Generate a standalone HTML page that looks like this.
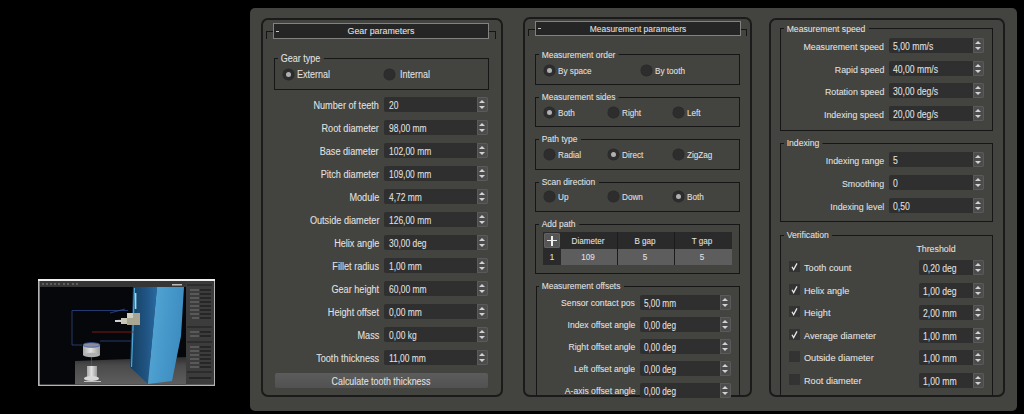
<!DOCTYPE html>
<html><head><meta charset="utf-8"><style>
html,body{margin:0;padding:0;background:#000;width:1024px;height:414px;overflow:hidden}
body{position:relative;font-family:"Liberation Sans", sans-serif;font-size:10px;color:#e2e2e2}
.t{position:absolute;white-space:nowrap;-webkit-text-stroke:0.15px rgba(226,226,226,0.5)}
.gb{position:absolute;border-left:1px solid #161616;border-right:1px solid #161616;border-top:1px solid #161616;box-sizing:border-box}
.gbt{background:#43433f}
.fd{position:absolute;background:#2f2f2f;border-radius:2px 0 0 2px}
.sp{position:absolute;width:11px;background:#4c4c4c;border-radius:0 2px 2px 0;box-shadow:inset 0 0 0 1px #5a5a5a}
.sp .up,.sp .dn{position:absolute;left:2px;width:0;height:0;border-left:3.5px solid transparent;border-right:3.5px solid transparent}
.sp .up{top:3px;border-bottom:3.5px solid #d2d2d2}
.sp .dn{top:9px;border-top:3.5px solid #d2d2d2}
.rd{position:absolute;width:11px;height:11px;border-radius:50%;background:#2d2d2d;box-shadow:0 0 0 0.5px #282828}
.rd b{position:absolute;left:3px;top:3px;width:5px;height:5px;border-radius:50%;background:#b0b0b0}
.cb{position:absolute;width:11px;height:11px;background:#333333}
.cb svg{position:absolute;left:0;top:0}
.tb{position:absolute;border:1px solid #828282;background:#252525}
.col{position:absolute;border:2px solid #1b1b1b;border-radius:7px;box-sizing:border-box;background:#43433f}
</style></head>
<body>
<div style="position:absolute;left:250px;top:8px;width:767px;height:403px;background:#43433f;border-radius:5px"></div>
<svg style="position:absolute;left:38px;top:279px" width="177" height="107" viewBox="38 279 177 107">
<defs>
<linearGradient id="lf" x1="0" y1="0" x2="1" y2="0.3"><stop offset="0" stop-color="#55a9d8"/><stop offset="1" stop-color="#3d8cc0"/></linearGradient>
<linearGradient id="df" x1="0" y1="0" x2="1" y2="0"><stop offset="0" stop-color="#163e60"/><stop offset="0.6" stop-color="#1f5482"/><stop offset="1" stop-color="#2a6aa4"/></linearGradient>
<linearGradient id="fl" x1="0" y1="0" x2="0" y2="1"><stop offset="0" stop-color="#2e2e2e"/><stop offset="0.3" stop-color="#4a4a4a"/><stop offset="1" stop-color="#5e5e5e"/></linearGradient>
<linearGradient id="cy" x1="0" y1="0" x2="1" y2="0"><stop offset="0" stop-color="#a9a9a9"/><stop offset="0.45" stop-color="#e0e0e0"/><stop offset="1" stop-color="#9a9a9a"/></linearGradient>
</defs>
<rect x="38" y="279" width="177" height="107" fill="#b4b4b4"/>
<rect x="38" y="279" width="177" height="2" fill="#f0f0f0"/>
<rect x="39.5" y="281" width="174.5" height="103.5" fill="#3a3a3a"/>
<rect x="40" y="287" width="146" height="97.5" fill="#05070a"/>
<polygon points="75,361 186,357 186,384.5 75,384.5" fill="url(#fl)"/>
<polygon points="133,287 157,287 148,384 130,367" fill="url(#df)"/>
<polygon points="157,287 184,287 181,336 172,381 148,384" fill="url(#lf)"/>
<path d="M134.5 288 L131.5 367" stroke="#4fa6d6" stroke-width="1.2"/>
<rect x="134.8" y="293" width="1.6" height="16" fill="#8fdcf5"/>
<path d="M72 345 V310.5 H128 M100 341 H131 M72 345 H82" stroke="#34509a" stroke-width="0.7" fill="none"/>
<path d="M110 313 L125 309 M118 320 L124 320" stroke="#34509a" stroke-width="1.2" fill="none" opacity="0.7"/>
<path d="M92 332 H134" stroke="#9a1c1c" stroke-width="0.8"/>
<rect x="121" y="318" width="11" height="6" fill="#c8c6b4"/>
<rect x="127" y="313" width="13" height="12" fill="#a9a694"/>
<rect x="127" y="313" width="6" height="5" fill="#d0cebc"/>
<rect x="115" y="320" width="7" height="2" fill="#d0d0d0"/>
<rect x="83" y="345" width="17" height="10" fill="url(#cy)"/>
<ellipse cx="91.5" cy="355" rx="8.5" ry="2.2" fill="#b0b0b0"/>
<ellipse cx="91.5" cy="345" rx="8.5" ry="2.3" fill="#8a8a9a" stroke="#3a5cb0" stroke-width="0.8"/>
<path d="M91.5 357 V366" stroke="#3a5cb0" stroke-width="0.7"/>
<rect x="87" y="366" width="10" height="11" fill="url(#cy)"/>
<ellipse cx="91.5" cy="378.5" rx="7.5" ry="2.5" fill="#d8d8d8"/>
<path d="M84 381.5 H101" stroke="#c0c0c0" stroke-width="1"/>
<rect x="186" y="283" width="27.5" height="101.5" fill="#3c3c3c"/>
<rect x="187" y="284" width="25" height="2" fill="#2c2c2c"/>
<rect x="187" y="326" width="25" height="2" fill="#2c2c2c"/>
<rect x="187" y="341" width="25" height="2" fill="#2c2c2c"/>
<rect x="187" y="371" width="25" height="2" fill="#2c2c2c"/>
<g fill="#262626">
<rect x="200" y="289" width="11" height="2"/><rect x="200" y="293" width="11" height="2"/><rect x="200" y="297" width="11" height="2"/><rect x="200" y="301" width="11" height="2"/><rect x="200" y="305" width="11" height="2"/><rect x="200" y="309" width="11" height="2"/><rect x="200" y="313" width="11" height="2"/><rect x="200" y="317" width="11" height="2"/>
<rect x="200" y="331" width="11" height="2"/><rect x="200" y="335" width="11" height="2"/>
<rect x="200" y="346" width="11" height="2"/><rect x="200" y="350" width="11" height="2"/><rect x="200" y="354" width="11" height="2"/><rect x="200" y="358" width="11" height="2"/><rect x="200" y="362" width="11" height="2"/><rect x="200" y="366" width="11" height="2"/>
<rect x="189" y="377" width="22" height="2"/>
</g>
<g fill="#777">
<rect x="190" y="289.5" width="9" height="1"/><rect x="190" y="293.5" width="9" height="1"/><rect x="190" y="297.5" width="9" height="1"/><rect x="190" y="301.5" width="9" height="1"/><rect x="190" y="305.5" width="9" height="1"/><rect x="190" y="309.5" width="9" height="1"/><rect x="190" y="313.5" width="9" height="1"/><rect x="192" y="317.5" width="7" height="1"/>
<rect x="190" y="331.5" width="9" height="1"/><rect x="190" y="335.5" width="9" height="1"/>
<rect x="190" y="346.5" width="9" height="1"/><rect x="190" y="350.5" width="9" height="1"/><rect x="190" y="354.5" width="9" height="1"/><rect x="190" y="358.5" width="9" height="1"/><rect x="190" y="362.5" width="9" height="1"/><rect x="190" y="366.5" width="9" height="1"/>
</g>
<rect x="40" y="281" width="146" height="6" fill="#363636"/>
<g fill="#5e5e5e"><rect x="42" y="283" width="2" height="2"/><rect x="46" y="283" width="2" height="2"/><rect x="50" y="283" width="2" height="2"/><rect x="54" y="283" width="2" height="2"/><rect x="58" y="283" width="2" height="2"/><rect x="63" y="283" width="2" height="2"/><rect x="67" y="283" width="2" height="2"/><rect x="72" y="283" width="2" height="2"/><rect x="76" y="283" width="2" height="2"/></g>
<rect x="172" y="284" width="10" height="1.5" fill="#bbb"/>
</svg>

<div class="col" style="left:261px;top:18px;width:242px;height:379px"></div>
<div class="col" style="left:523px;top:17px;width:229px;height:380px"></div>
<div class="col" style="left:769px;top:18px;width:236px;height:379px"></div>
<div style="position:absolute;left:266px;top:31px;width:7px;height:1px;background:#161616"></div>
<div style="position:absolute;left:266px;top:31px;width:1px;height:8px;background:#161616"></div>
<div style="position:absolute;left:489px;top:31px;width:7px;height:1px;background:#161616"></div>
<div style="position:absolute;left:495px;top:31px;width:1px;height:8px;background:#161616"></div>
<div class="tb" style="left:273px;top:23px;width:214px;height:14px;"></div>
<div style="position:absolute;left:276px;top:31px;width:3px;height:1px;background:#c4c4c4"></div>
<div class="t" style="left:281px;width:200px;font-size:9.87px;top:23px;height:16px;line-height:16px;text-align:center;transform:scaleX(0.8981);transform-origin:center center;">Gear parameters</div>
<div class="gb" style="left:274px;top:58px;width:215px;height:32px;border-bottom:1px solid #161616;"></div>
<div class="t gbt" style="font-size:10.19px;left:278px;top:52px;height:14px;line-height:14px;padding:0 4px 0 3px;transform:scaleX(0.8838);transform-origin:left center">Gear type</div>
<div class="rd" style="left:282.5px;top:68.5px;"><b></b></div>
<div class="t" style="left:297px;font-size:10.19px;top:68px;height:14px;line-height:14px;transform:scaleX(0.8838);transform-origin:left center;">External</div>
<div class="rd" style="left:383.5px;top:68.5px;"></div>
<div class="t" style="left:400px;font-size:10.19px;top:68px;height:14px;line-height:14px;transform:scaleX(0.8838);transform-origin:left center;">Internal</div>
<div class="t" style="right:645px;font-size:10.19px;top:98px;height:15px;line-height:15px;text-align:right;transform:scaleX(0.8981);transform-origin:right center;">Number of teeth</div>
<div class="fd" style="left:384px;top:97px;width:93px;height:15px;"></div>
<div class="t" style="left:389px;font-size:10.5px;top:98px;height:15px;line-height:15px;transform:scaleX(0.8038);transform-origin:left center;">20</div>
<div class="sp" style="left:477px;top:97px;height:15px;"><i class="up"></i><i class="dn"></i></div>
<div class="t" style="right:645px;font-size:10.19px;top:121px;height:15px;line-height:15px;text-align:right;transform:scaleX(0.8981);transform-origin:right center;">Root diameter</div>
<div class="fd" style="left:384px;top:120px;width:93px;height:15px;"></div>
<div class="t" style="left:389px;font-size:10.5px;top:121px;height:15px;line-height:15px;transform:scaleX(0.8038);transform-origin:left center;">98,00 mm</div>
<div class="sp" style="left:477px;top:120px;height:15px;"><i class="up"></i><i class="dn"></i></div>
<div class="t" style="right:645px;font-size:10.19px;top:144px;height:15px;line-height:15px;text-align:right;transform:scaleX(0.8981);transform-origin:right center;">Base diameter</div>
<div class="fd" style="left:384px;top:143px;width:93px;height:15px;"></div>
<div class="t" style="left:389px;font-size:10.5px;top:144px;height:15px;line-height:15px;transform:scaleX(0.8038);transform-origin:left center;">102,00 mm</div>
<div class="sp" style="left:477px;top:143px;height:15px;"><i class="up"></i><i class="dn"></i></div>
<div class="t" style="right:645px;font-size:10.19px;top:167px;height:15px;line-height:15px;text-align:right;transform:scaleX(0.8981);transform-origin:right center;">Pitch diameter</div>
<div class="fd" style="left:384px;top:166px;width:93px;height:15px;"></div>
<div class="t" style="left:389px;font-size:10.5px;top:167px;height:15px;line-height:15px;transform:scaleX(0.8038);transform-origin:left center;">109,00 mm</div>
<div class="sp" style="left:477px;top:166px;height:15px;"><i class="up"></i><i class="dn"></i></div>
<div class="t" style="right:645px;font-size:10.19px;top:190px;height:15px;line-height:15px;text-align:right;transform:scaleX(0.8981);transform-origin:right center;">Module</div>
<div class="fd" style="left:384px;top:189px;width:93px;height:15px;"></div>
<div class="t" style="left:389px;font-size:10.5px;top:190px;height:15px;line-height:15px;transform:scaleX(0.8038);transform-origin:left center;">4,72 mm</div>
<div class="sp" style="left:477px;top:189px;height:15px;"><i class="up"></i><i class="dn"></i></div>
<div class="t" style="right:645px;font-size:10.19px;top:213px;height:15px;line-height:15px;text-align:right;transform:scaleX(0.8981);transform-origin:right center;">Outside diameter</div>
<div class="fd" style="left:384px;top:212px;width:93px;height:15px;"></div>
<div class="t" style="left:389px;font-size:10.5px;top:213px;height:15px;line-height:15px;transform:scaleX(0.8038);transform-origin:left center;">126,00 mm</div>
<div class="sp" style="left:477px;top:212px;height:15px;"><i class="up"></i><i class="dn"></i></div>
<div class="t" style="right:645px;font-size:10.19px;top:236px;height:15px;line-height:15px;text-align:right;transform:scaleX(0.8981);transform-origin:right center;">Helix angle</div>
<div class="fd" style="left:384px;top:235px;width:93px;height:15px;"></div>
<div class="t" style="left:389px;font-size:10.5px;top:236px;height:15px;line-height:15px;transform:scaleX(0.8038);transform-origin:left center;">30,00 deg</div>
<div class="sp" style="left:477px;top:235px;height:15px;"><i class="up"></i><i class="dn"></i></div>
<div class="t" style="right:645px;font-size:10.19px;top:259px;height:15px;line-height:15px;text-align:right;transform:scaleX(0.8981);transform-origin:right center;">Fillet radius</div>
<div class="fd" style="left:384px;top:258px;width:93px;height:15px;"></div>
<div class="t" style="left:389px;font-size:10.5px;top:259px;height:15px;line-height:15px;transform:scaleX(0.8038);transform-origin:left center;">1,00 mm</div>
<div class="sp" style="left:477px;top:258px;height:15px;"><i class="up"></i><i class="dn"></i></div>
<div class="t" style="right:645px;font-size:10.19px;top:282px;height:15px;line-height:15px;text-align:right;transform:scaleX(0.8981);transform-origin:right center;">Gear height</div>
<div class="fd" style="left:384px;top:281px;width:93px;height:15px;"></div>
<div class="t" style="left:389px;font-size:10.5px;top:282px;height:15px;line-height:15px;transform:scaleX(0.8038);transform-origin:left center;">60,00 mm</div>
<div class="sp" style="left:477px;top:281px;height:15px;"><i class="up"></i><i class="dn"></i></div>
<div class="t" style="right:645px;font-size:10.19px;top:305px;height:15px;line-height:15px;text-align:right;transform:scaleX(0.8981);transform-origin:right center;">Height offset</div>
<div class="fd" style="left:384px;top:304px;width:93px;height:15px;"></div>
<div class="t" style="left:389px;font-size:10.5px;top:305px;height:15px;line-height:15px;transform:scaleX(0.8038);transform-origin:left center;">0,00 mm</div>
<div class="sp" style="left:477px;top:304px;height:15px;"><i class="up"></i><i class="dn"></i></div>
<div class="t" style="right:645px;font-size:10.19px;top:328px;height:15px;line-height:15px;text-align:right;transform:scaleX(0.8981);transform-origin:right center;">Mass</div>
<div class="fd" style="left:384px;top:327px;width:93px;height:15px;"></div>
<div class="t" style="left:389px;font-size:10.5px;top:328px;height:15px;line-height:15px;transform:scaleX(0.8038);transform-origin:left center;">0,00 kg</div>
<div class="sp" style="left:477px;top:327px;height:15px;"><i class="up"></i><i class="dn"></i></div>
<div class="t" style="right:645px;font-size:10.19px;top:351px;height:15px;line-height:15px;text-align:right;transform:scaleX(0.8981);transform-origin:right center;">Tooth thickness</div>
<div class="fd" style="left:384px;top:350px;width:93px;height:15px;"></div>
<div class="t" style="left:389px;font-size:10.5px;top:351px;height:15px;line-height:15px;transform:scaleX(0.8038);transform-origin:left center;">11,00 mm</div>
<div class="sp" style="left:477px;top:350px;height:15px;"><i class="up"></i><i class="dn"></i></div>
<div style="position:absolute;left:275px;top:373px;width:213px;height:15px;background:linear-gradient(#5c5c5c,#515151);border-radius:2px"></div>
<div class="t" style="left:281px;width:200px;font-size:10.19px;top:374px;height:15px;line-height:15px;text-align:center;transform:scaleX(0.8743);transform-origin:center center;">Calculate tooth thickness</div>
<div style="position:absolute;left:528px;top:29px;width:7px;height:1px;background:#161616"></div>
<div style="position:absolute;left:528px;top:29px;width:1px;height:7px;background:#161616"></div>
<div style="position:absolute;left:741px;top:29px;width:6px;height:1px;background:#161616"></div>
<div style="position:absolute;left:746px;top:29px;width:1px;height:7px;background:#161616"></div>
<div class="tb" style="left:535px;top:21px;width:204px;height:13px;"></div>
<div style="position:absolute;left:538px;top:28px;width:3px;height:1px;background:#c4c4c4"></div>
<div class="t" style="left:538px;width:200px;font-size:9.45px;top:21px;height:15px;line-height:15px;text-align:center;transform:scaleX(0.8914);transform-origin:center center;">Measurement parameters</div>
<div class="gb" style="left:535px;top:54px;width:205px;height:31px;border-bottom:1px solid #161616;"></div>
<div class="t gbt" style="font-size:9.45px;left:539px;top:48px;height:14px;line-height:14px;padding:0 4px 0 3px;transform:scaleX(0.8952);transform-origin:left center">Measurement order</div>
<div class="rd" style="left:543.5px;top:64.5px;"><b></b></div>
<div class="t" style="left:558px;font-size:9.45px;top:64px;height:14px;line-height:14px;transform:scaleX(0.865);transform-origin:left center;">By space</div>
<div class="rd" style="left:640.5px;top:64.5px;"></div>
<div class="t" style="left:655px;font-size:9.45px;top:64px;height:14px;line-height:14px;transform:scaleX(0.865);transform-origin:left center;">By tooth</div>
<div class="gb" style="left:535px;top:97px;width:205px;height:30px;border-bottom:1px solid #161616;"></div>
<div class="t gbt" style="font-size:9.45px;left:539px;top:90px;height:14px;line-height:14px;padding:0 4px 0 3px;transform:scaleX(0.8952);transform-origin:left center">Measurement sides</div>
<div class="rd" style="left:543.5px;top:106.5px;"><b></b></div>
<div class="t" style="left:558px;font-size:9.45px;top:106px;height:14px;line-height:14px;transform:scaleX(0.865);transform-origin:left center;">Both</div>
<div class="rd" style="left:607.5px;top:106.5px;"></div>
<div class="t" style="left:622px;font-size:9.45px;top:106px;height:14px;line-height:14px;transform:scaleX(0.865);transform-origin:left center;">Right</div>
<div class="rd" style="left:672.5px;top:106.5px;"></div>
<div class="t" style="left:687px;font-size:9.45px;top:106px;height:14px;line-height:14px;transform:scaleX(0.865);transform-origin:left center;">Left</div>
<div class="gb" style="left:535px;top:139px;width:205px;height:31px;border-bottom:1px solid #161616;"></div>
<div class="t gbt" style="font-size:9.45px;left:539px;top:132px;height:14px;line-height:14px;padding:0 4px 0 3px;transform:scaleX(0.8952);transform-origin:left center">Path type</div>
<div class="rd" style="left:543.5px;top:148.5px;"></div>
<div class="t" style="left:558px;font-size:9.45px;top:148px;height:14px;line-height:14px;transform:scaleX(0.865);transform-origin:left center;">Radial</div>
<div class="rd" style="left:607.5px;top:148.5px;"><b></b></div>
<div class="t" style="left:622px;font-size:9.45px;top:148px;height:14px;line-height:14px;transform:scaleX(0.865);transform-origin:left center;">Direct</div>
<div class="rd" style="left:672.5px;top:148.5px;"></div>
<div class="t" style="left:687px;font-size:9.45px;top:148px;height:14px;line-height:14px;transform:scaleX(0.865);transform-origin:left center;">ZigZag</div>
<div class="gb" style="left:535px;top:182px;width:205px;height:30px;border-bottom:1px solid #161616;"></div>
<div class="t gbt" style="font-size:9.45px;left:539px;top:175px;height:14px;line-height:14px;padding:0 4px 0 3px;transform:scaleX(0.8952);transform-origin:left center">Scan direction</div>
<div class="rd" style="left:543.5px;top:190.5px;"></div>
<div class="t" style="left:558px;font-size:9.45px;top:190px;height:14px;line-height:14px;transform:scaleX(0.865);transform-origin:left center;">Up</div>
<div class="rd" style="left:607.5px;top:190.5px;"></div>
<div class="t" style="left:622px;font-size:9.45px;top:190px;height:14px;line-height:14px;transform:scaleX(0.865);transform-origin:left center;">Down</div>
<div class="rd" style="left:672.5px;top:190.5px;"><b></b></div>
<div class="t" style="left:687px;font-size:9.45px;top:190px;height:14px;line-height:14px;transform:scaleX(0.865);transform-origin:left center;">Both</div>
<div class="gb" style="left:535px;top:224px;width:205px;height:50px;border-bottom:1px solid #161616;"></div>
<div class="t gbt" style="font-size:9.45px;left:539px;top:217px;height:14px;line-height:14px;padding:0 4px 0 3px;transform:scaleX(0.8952);transform-origin:left center">Add path</div>
<div style="position:absolute;left:543px;top:232px;width:189px;height:32.5px;background:#2a2a2a"></div>
<div style="position:absolute;left:544px;top:232.5px;width:16px;height:15px;background:#555;border-radius:2px;box-shadow:inset 0 0 0 1px #626262"></div>
<div style="position:absolute;left:547px;top:240px;width:10px;height:1.4px;background:#eee"></div>
<div style="position:absolute;left:551.3px;top:235.5px;width:1.4px;height:10px;background:#eee"></div>
<div style="position:absolute;left:560.5px;top:248.5px;width:57px;height:16px;background:#5d5d5d"></div>
<div style="position:absolute;left:618px;top:248.5px;width:56px;height:16px;background:#5d5d5d"></div>
<div style="position:absolute;left:675px;top:248.5px;width:57px;height:16px;background:#5d5d5d"></div>
<div style="position:absolute;left:617px;top:232px;width:1px;height:33px;background:#1c1c1c"></div>
<div style="position:absolute;left:674px;top:232px;width:1px;height:33px;background:#1c1c1c"></div>
<div class="t" style="left:488px;width:200px;font-size:9.45px;top:233px;height:15px;line-height:15px;text-align:center;transform:scaleX(0.8571);transform-origin:center center;">Diameter</div>
<div class="t" style="left:545px;width:200px;font-size:9.45px;top:233px;height:15px;line-height:15px;text-align:center;transform:scaleX(0.8571);transform-origin:center center;">B gap</div>
<div class="t" style="left:602px;width:200px;font-size:9.45px;top:233px;height:15px;line-height:15px;text-align:center;transform:scaleX(0.8571);transform-origin:center center;">T gap</div>
<div class="t" style="left:452px;width:200px;font-size:9.45px;top:249px;height:16px;line-height:16px;text-align:center;transform:scaleX(0.8571);transform-origin:center center;">1</div>
<div class="t" style="left:488px;width:200px;font-size:9.45px;top:249px;height:16px;line-height:16px;text-align:center;transform:scaleX(0.8571);transform-origin:center center;">109</div>
<div class="t" style="left:545px;width:200px;font-size:9.45px;top:249px;height:16px;line-height:16px;text-align:center;transform:scaleX(0.8571);transform-origin:center center;">5</div>
<div class="t" style="left:602px;width:200px;font-size:9.45px;top:249px;height:16px;line-height:16px;text-align:center;transform:scaleX(0.8571);transform-origin:center center;">5</div>
<div class="gb" style="left:536px;top:286px;width:204px;height:109px;"></div>
<div class="t gbt" style="font-size:9.45px;left:539px;top:279px;height:14px;line-height:14px;padding:0 4px 0 3px;transform:scaleX(0.8952);transform-origin:left center">Measurement offsets</div>
<div class="t" style="right:389px;font-size:9.45px;top:295px;height:15px;line-height:15px;text-align:right;transform:scaleX(0.912);transform-origin:right center;">Sensor contact pos</div>
<div class="fd" style="left:640px;top:295px;width:80px;height:15px;"></div>
<div class="t" style="left:644px;font-size:10.08px;top:296px;height:15px;line-height:15px;transform:scaleX(0.8162);transform-origin:left center;">5,00 mm</div>
<div class="sp" style="left:720px;top:295px;height:15px;"><i class="up"></i><i class="dn"></i></div>
<div class="t" style="right:389px;font-size:9.45px;top:317px;height:15px;line-height:15px;text-align:right;transform:scaleX(0.912);transform-origin:right center;">Index offset angle</div>
<div class="fd" style="left:640px;top:317px;width:80px;height:15px;"></div>
<div class="t" style="left:644px;font-size:10.08px;top:318px;height:15px;line-height:15px;transform:scaleX(0.8162);transform-origin:left center;">0,00 deg</div>
<div class="sp" style="left:720px;top:317px;height:15px;"><i class="up"></i><i class="dn"></i></div>
<div class="t" style="right:389px;font-size:9.45px;top:339px;height:15px;line-height:15px;text-align:right;transform:scaleX(0.912);transform-origin:right center;">Right offset angle</div>
<div class="fd" style="left:640px;top:339px;width:80px;height:15px;"></div>
<div class="t" style="left:644px;font-size:10.08px;top:340px;height:15px;line-height:15px;transform:scaleX(0.8162);transform-origin:left center;">0,00 deg</div>
<div class="sp" style="left:720px;top:339px;height:15px;"><i class="up"></i><i class="dn"></i></div>
<div class="t" style="right:389px;font-size:9.45px;top:361px;height:15px;line-height:15px;text-align:right;transform:scaleX(0.912);transform-origin:right center;">Left offset angle</div>
<div class="fd" style="left:640px;top:361px;width:80px;height:15px;"></div>
<div class="t" style="left:644px;font-size:10.08px;top:362px;height:15px;line-height:15px;transform:scaleX(0.8162);transform-origin:left center;">0,00 deg</div>
<div class="sp" style="left:720px;top:361px;height:15px;"><i class="up"></i><i class="dn"></i></div>
<div class="t" style="right:389px;font-size:9.45px;top:383px;height:15px;line-height:15px;text-align:right;transform:scaleX(0.912);transform-origin:right center;">A-axis offset angle</div>
<div class="fd" style="left:640px;top:383px;width:80px;height:15px;"></div>
<div class="t" style="left:644px;font-size:10.08px;top:384px;height:15px;line-height:15px;transform:scaleX(0.8162);transform-origin:left center;">0,00 deg</div>
<div class="sp" style="left:720px;top:383px;height:15px;"><i class="up"></i><i class="dn"></i></div>
<div class="gb" style="left:780px;top:28px;width:213px;height:103px;border-bottom:1px solid #161616;"></div>
<div class="t gbt" style="font-size:9.87px;left:784px;top:22px;height:14px;line-height:14px;padding:0 4px 0 3px;transform:scaleX(0.8762);transform-origin:left center">Measurement speed</div>
<div class="t" style="right:140px;font-size:9.87px;top:39px;height:15px;line-height:15px;text-align:right;transform:scaleX(0.8952);transform-origin:right center;">Measurement speed</div>
<div class="fd" style="left:889px;top:38px;width:84px;height:15px;"></div>
<div class="t" style="left:893px;font-size:10.5px;top:39px;height:15px;line-height:15px;transform:scaleX(0.8219);transform-origin:left center;">5,00 mm/s</div>
<div class="sp" style="left:973px;top:38px;height:15px;"><i class="up"></i><i class="dn"></i></div>
<div class="t" style="right:140px;font-size:9.87px;top:62px;height:15px;line-height:15px;text-align:right;transform:scaleX(0.8952);transform-origin:right center;">Rapid speed</div>
<div class="fd" style="left:889px;top:61px;width:84px;height:15px;"></div>
<div class="t" style="left:893px;font-size:10.5px;top:62px;height:15px;line-height:15px;transform:scaleX(0.8219);transform-origin:left center;">40,00 mm/s</div>
<div class="sp" style="left:973px;top:61px;height:15px;"><i class="up"></i><i class="dn"></i></div>
<div class="t" style="right:140px;font-size:9.87px;top:84px;height:15px;line-height:15px;text-align:right;transform:scaleX(0.8952);transform-origin:right center;">Rotation speed</div>
<div class="fd" style="left:889px;top:83px;width:84px;height:15px;"></div>
<div class="t" style="left:893px;font-size:10.5px;top:84px;height:15px;line-height:15px;transform:scaleX(0.8219);transform-origin:left center;">30,00 deg/s</div>
<div class="sp" style="left:973px;top:83px;height:15px;"><i class="up"></i><i class="dn"></i></div>
<div class="t" style="right:140px;font-size:9.87px;top:107px;height:15px;line-height:15px;text-align:right;transform:scaleX(0.8952);transform-origin:right center;">Indexing speed</div>
<div class="fd" style="left:889px;top:106px;width:84px;height:15px;"></div>
<div class="t" style="left:893px;font-size:10.5px;top:107px;height:15px;line-height:15px;transform:scaleX(0.8219);transform-origin:left center;">20,00 deg/s</div>
<div class="sp" style="left:973px;top:106px;height:15px;"><i class="up"></i><i class="dn"></i></div>
<div class="gb" style="left:780px;top:143px;width:213px;height:79px;border-bottom:1px solid #161616;"></div>
<div class="t gbt" style="font-size:9.87px;left:784px;top:136px;height:14px;line-height:14px;padding:0 4px 0 3px;transform:scaleX(0.8762);transform-origin:left center">Indexing</div>
<div class="t" style="right:140px;font-size:9.87px;top:153px;height:15px;line-height:15px;text-align:right;transform:scaleX(0.8952);transform-origin:right center;">Indexing range</div>
<div class="fd" style="left:889px;top:152px;width:84px;height:15px;"></div>
<div class="t" style="left:893px;font-size:10.5px;top:153px;height:15px;line-height:15px;transform:scaleX(0.8219);transform-origin:left center;">5</div>
<div class="sp" style="left:973px;top:152px;height:15px;"><i class="up"></i><i class="dn"></i></div>
<div class="t" style="right:140px;font-size:9.87px;top:176px;height:15px;line-height:15px;text-align:right;transform:scaleX(0.8952);transform-origin:right center;">Smoothing</div>
<div class="fd" style="left:889px;top:175px;width:84px;height:15px;"></div>
<div class="t" style="left:893px;font-size:10.5px;top:176px;height:15px;line-height:15px;transform:scaleX(0.8219);transform-origin:left center;">0</div>
<div class="sp" style="left:973px;top:175px;height:15px;"><i class="up"></i><i class="dn"></i></div>
<div class="t" style="right:140px;font-size:9.87px;top:199px;height:15px;line-height:15px;text-align:right;transform:scaleX(0.8952);transform-origin:right center;">Indexing level</div>
<div class="fd" style="left:889px;top:198px;width:84px;height:15px;"></div>
<div class="t" style="left:893px;font-size:10.5px;top:199px;height:15px;line-height:15px;transform:scaleX(0.8219);transform-origin:left center;">0,50</div>
<div class="sp" style="left:973px;top:198px;height:15px;"><i class="up"></i><i class="dn"></i></div>
<div class="gb" style="left:780px;top:235px;width:213px;height:160px;"></div>
<div class="t gbt" style="font-size:9.87px;left:784px;top:228px;height:14px;line-height:14px;padding:0 4px 0 3px;transform:scaleX(0.8762);transform-origin:left center">Verification</div>
<div class="t" style="left:836px;width:200px;font-size:9.87px;top:241px;height:15px;line-height:15px;text-align:center;transform:scaleX(0.8952);transform-origin:center center;">Threshold</div>
<div class="cb" style="left:789px;top:261px;"><svg width="11" height="11" viewBox="0 0 11 11"><path d="M3 5.8 L4.6 8.6 L8 2.4" stroke="#e6e6e6" stroke-width="1.3" fill="none"/></svg></div>
<div class="t" style="left:804px;font-size:9.87px;top:260px;height:15px;line-height:15px;transform:scaleX(0.9286);transform-origin:left center;">Tooth count</div>
<div class="fd" style="left:919px;top:260px;width:54px;height:15px;"></div>
<div class="t" style="left:923px;font-size:10.5px;top:261px;height:15px;line-height:15px;transform:scaleX(0.8219);transform-origin:left center;">0,20 deg</div>
<div class="sp" style="left:973px;top:260px;height:15px;"><i class="up"></i><i class="dn"></i></div>
<div class="cb" style="left:789px;top:284px;"><svg width="11" height="11" viewBox="0 0 11 11"><path d="M3 5.8 L4.6 8.6 L8 2.4" stroke="#e6e6e6" stroke-width="1.3" fill="none"/></svg></div>
<div class="t" style="left:804px;font-size:9.87px;top:283px;height:15px;line-height:15px;transform:scaleX(0.9286);transform-origin:left center;">Helix angle</div>
<div class="fd" style="left:919px;top:283px;width:54px;height:15px;"></div>
<div class="t" style="left:923px;font-size:10.5px;top:284px;height:15px;line-height:15px;transform:scaleX(0.8219);transform-origin:left center;">1,00 deg</div>
<div class="sp" style="left:973px;top:283px;height:15px;"><i class="up"></i><i class="dn"></i></div>
<div class="cb" style="left:789px;top:306px;"><svg width="11" height="11" viewBox="0 0 11 11"><path d="M3 5.8 L4.6 8.6 L8 2.4" stroke="#e6e6e6" stroke-width="1.3" fill="none"/></svg></div>
<div class="t" style="left:804px;font-size:9.87px;top:305px;height:15px;line-height:15px;transform:scaleX(0.9286);transform-origin:left center;">Height</div>
<div class="fd" style="left:919px;top:305px;width:54px;height:15px;"></div>
<div class="t" style="left:923px;font-size:10.5px;top:306px;height:15px;line-height:15px;transform:scaleX(0.8219);transform-origin:left center;">2,00 mm</div>
<div class="sp" style="left:973px;top:305px;height:15px;"><i class="up"></i><i class="dn"></i></div>
<div class="cb" style="left:789px;top:329px;"><svg width="11" height="11" viewBox="0 0 11 11"><path d="M3 5.8 L4.6 8.6 L8 2.4" stroke="#e6e6e6" stroke-width="1.3" fill="none"/></svg></div>
<div class="t" style="left:804px;font-size:9.87px;top:328px;height:15px;line-height:15px;transform:scaleX(0.9286);transform-origin:left center;">Average diameter</div>
<div class="fd" style="left:919px;top:328px;width:54px;height:15px;"></div>
<div class="t" style="left:923px;font-size:10.5px;top:329px;height:15px;line-height:15px;transform:scaleX(0.8219);transform-origin:left center;">1,00 mm</div>
<div class="sp" style="left:973px;top:328px;height:15px;"><i class="up"></i><i class="dn"></i></div>
<div class="cb" style="left:789px;top:351px;"></div>
<div class="t" style="left:804px;font-size:9.87px;top:350px;height:15px;line-height:15px;transform:scaleX(0.9286);transform-origin:left center;">Outside diameter</div>
<div class="fd" style="left:919px;top:350px;width:54px;height:15px;"></div>
<div class="t" style="left:923px;font-size:10.5px;top:351px;height:15px;line-height:15px;transform:scaleX(0.8219);transform-origin:left center;">1,00 mm</div>
<div class="sp" style="left:973px;top:350px;height:15px;"><i class="up"></i><i class="dn"></i></div>
<div class="cb" style="left:789px;top:374px;"></div>
<div class="t" style="left:804px;font-size:9.87px;top:373px;height:15px;line-height:15px;transform:scaleX(0.9286);transform-origin:left center;">Root diameter</div>
<div class="fd" style="left:919px;top:373px;width:54px;height:15px;"></div>
<div class="t" style="left:923px;font-size:10.5px;top:374px;height:15px;line-height:15px;transform:scaleX(0.8219);transform-origin:left center;">1,00 mm</div>
<div class="sp" style="left:973px;top:373px;height:15px;"><i class="up"></i><i class="dn"></i></div>
</body></html>
